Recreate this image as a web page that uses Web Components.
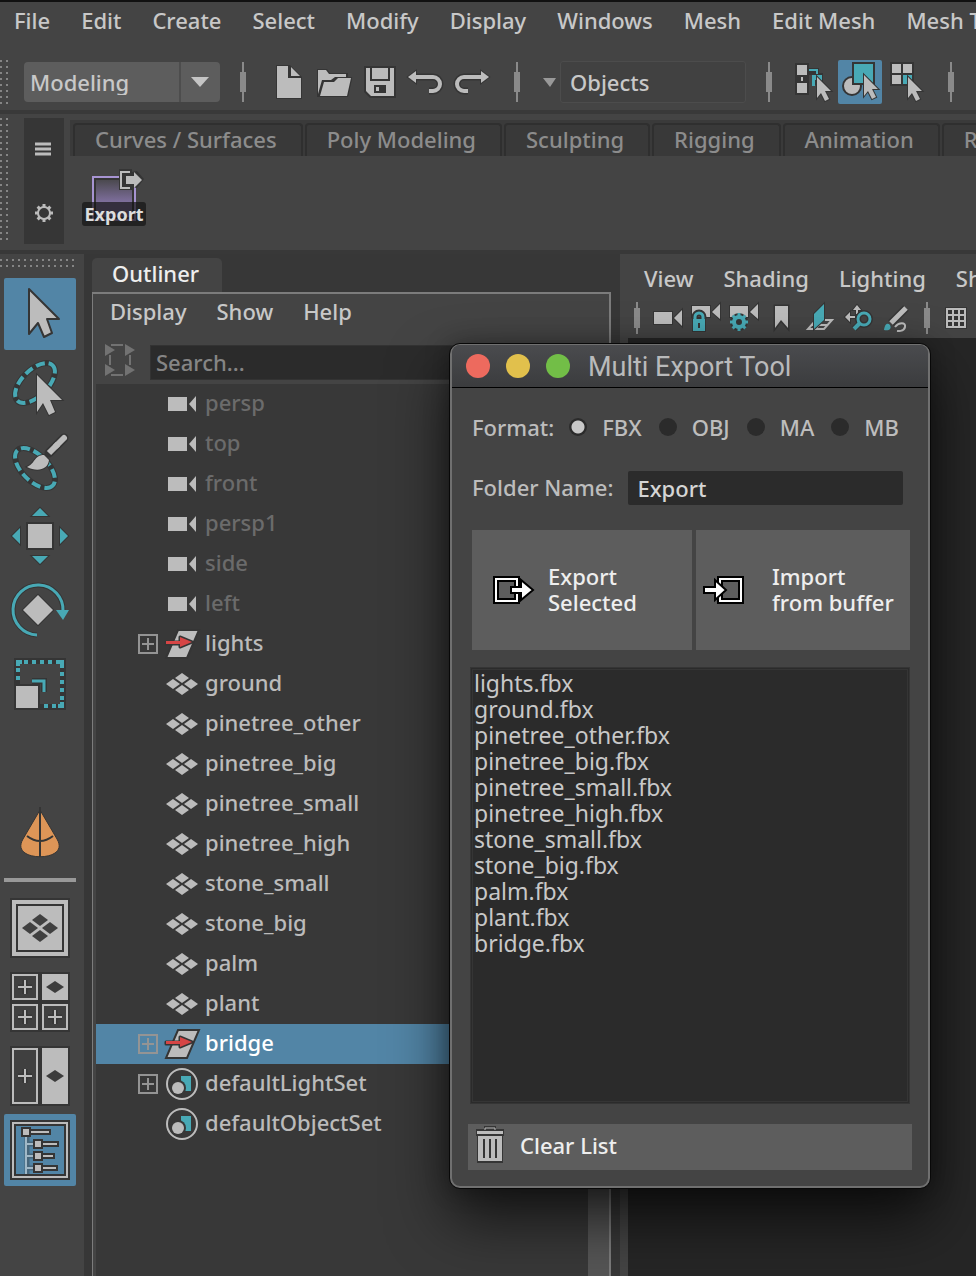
<!DOCTYPE html>
<html lang="en">
<head>
<meta charset="utf-8">
<title>Multi Export Tool</title>
<style>
  html {
    --bg: #444; --dark: #383838; --field: #2b2b2b; --ink: #c8c8c8; --glyph: #bcbcbc;
    --blue: #5285a6; --teal: #48a9b5; --edge: #353535; --button: #5d5d5d;
    background: #444;
  }
  body { margin: 0; font: 500 22px/26px "Noto Sans", sans-serif; color: #c8c8c8; }
</style>
</head>
<body>
<maya-app></maya-app>
<script>
const define = (name, html, setup) => {
  const template = document.createElement('template');
  template.innerHTML = '<style>*{box-sizing:border-box}:host{display:block}button,input,select{font:inherit}button{border:0;padding:0;color:inherit;background:none}</style>' + html;
  customElements.define(name, class extends HTMLElement {
    constructor() {
      super();
      this.attachShadow({ mode: 'open' }).append(template.content.cloneNode(true));
    }
    connectedCallback() { if (setup) setup(this, this.shadowRoot); }
  });
};

const G = '#bcbcbc', T = '#48a9b5', D = '#353535';
const pointer = (x, y) => `<path d="M${x} ${y}l14 14h-6l4 8-4 2-4-8-4 5z" fill="${G}" stroke="${D}" stroke-width="2" paint-order="stroke"/>`;
const diamonds = (cx, cy, dx, dy, w, h, c) => [[0,-dy],[-dx,0],[dx,0],[0,dy]].map(([a, b]) => `<path d="M${cx+a-w} ${cy+b}l${w}-${h} ${w} ${h}-${w} ${h}z" fill="${c}"/>`).join('');
const plusBox = (x, y, w, h) => `<rect x="${x-1}" y="${y-1}" width="${w+2}" height="${h+2}" fill="${D}"/><rect x="${x+2}" y="${y+2}" width="${w-4}" height="${h-4}" fill="#404040"/><rect x="${x+1}" y="${y+1}" width="${w-2}" height="${h-2}" fill="none" stroke="${G}" stroke-width="2"/><path d="M${x+w/2} ${y+h/2-7}v14m-7-7h14" stroke="${D}" stroke-width="5"/><path d="M${x+w/2} ${y+h/2-7}v14m-7-7h14" stroke="${G}" stroke-width="2"/>`;
const solidBox = (x, y, w, h) => `<rect x="${x-1}" y="${y-1}" width="${w+2}" height="${h+2}" fill="${D}"/><rect x="${x}" y="${y}" width="${w}" height="${h}" fill="${G}"/><path d="M${x+w/2-9} ${y+h/2}l9-6 9 6-9 6z" fill="#3c3c3c"/>`;
const gear = (cx, cy, r, c, t, s) => `<g stroke="${c}" fill="none"><circle cx="${cx}" cy="${cy}" r="${r}" stroke-width="${s}"/>` + [0,45,90,135,180,225,270,315].map(a => `<path d="M${cx} ${cy-r-t}v${t}" stroke-width="3" transform="rotate(${a} ${cx} ${cy})"/>`).join('') + '</g>';
const transformIcon = `<path d="M12 6H33L21 34H0Z" fill="${G}" stroke="${D}" stroke-width="2"/><path d="M0 18H14V13L26 18 14 23V20H0Z" fill="#d64545" stroke="${D}" stroke-width="3" paint-order="stroke" stroke-linejoin="round"/><path d="M0 18H15" stroke="#d64545" stroke-width="2"/>`;
const small = 44, tool = 72;
const icons = {
  newfile: [small, small, `<path d="M10 5H24L36 17V39H10Z" fill="${D}"/><path d="M11 6H22V18H35V38H11Z" fill="${G}"/><path d="M25 7 34 16H25Z" fill="${G}"/>`],
  open: [small, small, `<path d="M5 9h10l3 4h18v6h4l-4 18H5z" fill="${D}"/><path d="M6 34V10h8l3 4h17v3H23l-4 3H10z" fill="${G}"/><path d="M8 36 12 22H22L26 18H39L35 36Z" fill="${G}" stroke="${D}" stroke-width="2" paint-order="stroke"/>`],
  save: [small, small, `<path d="M6 6H38V38H12L6 32Z" fill="${D}"/><path d="M8 8h4v13h20V8h4v28H13l-5-5zM14 8h16v11H14z" fill="${G}"/><path d="M16 25h12v8H16z" fill="${D}"/><path d="M18 27h3v4h-3z" fill="${G}"/>`],
  undo: [small, small, `<path d="M10 17H29a7 7 0 0 1 0 14H25" fill="none" stroke="${D}" stroke-width="7"/><path d="M4 17l8-6v12z" fill="${G}" stroke="${D}" stroke-width="2" paint-order="stroke"/><path d="M10 17H29a7 7 0 0 1 0 14H25" fill="none" stroke="${G}" stroke-width="4"/>`],
  redo: [small, small, `<path d="M33 17H14a7 7 0 0 0 0 14H18" fill="none" stroke="${D}" stroke-width="7"/><path d="M39 17l-8-6v12z" fill="${G}" stroke="${D}" stroke-width="2" paint-order="stroke"/><path d="M33 17H14a7 7 0 0 0 0 14H18" fill="none" stroke="${G}" stroke-width="4"/>`],
  hierarchy: [small, small, `<path d="M3 3h14v32H3z" fill="${D}"/><path d="M5 5h10v10H5zM9 17h2v4H9zM5 23h10v10H5z" fill="${G}"/><path d="M15 8h12v5h4v12H20V15h-5z" fill="${D}"/><path d="M17 10h8v4" fill="none" stroke="${T}" stroke-width="2"/><path d="M20 15h10v10h-3v-5h-4v6h-3z" fill="${T}"/>${pointer(25,17)}`],
  object: [small, small, `<circle cx="14" cy="26" r="9" fill="${G}" stroke="${D}" stroke-width="2"/><path d="M15 3h21v21H15z" fill="${T}" stroke="${D}" stroke-width="2"/>${pointer(26,15)}`],
  component: [small, small, `<path d="M6 2h24v24H6z" fill="${D}"/><path d="M8 4h9v9H8zM19 4h9v9h-9zM8 15h9v9H8z" fill="${G}"/><path d="M19 15h9v9h-9z" fill="${T}"/>${pointer(24,17)}`],
  menu: [18, 16, `<path d="M0 4h16M0 9h16M0 14h16" stroke="${G}" stroke-width="3"/>`],
  gear: [20, 20, gear(10,10,6,G,3,2)],
  shelfexport: [64, 60, `<defs><linearGradient id="p" x2="0" y2="1"><stop offset="0" stop-color="#444"/><stop offset=".6" stop-color="#8070a0"/></linearGradient></defs><path d="M11 9H53V52H11Z" fill="url(#p)" stroke="#a794d2" stroke-width="2"/><path d="M13 11H51V50H13Z" fill="none" stroke="${D}" stroke-width="2"/><path d="M37 1h13v3l5-1 7 8-7 9-5-1v3H37z" fill="${D}"/><path d="M48 4H39V20H48" fill="none" stroke="${G}" stroke-width="2"/><path d="M44 8h8V4l8 8-8 8v-4h-8z" fill="${G}"/>`],
  select: [tool, tool, `<path d="M25 11 55 41H43L48 55 40 59 34 45 25 56Z" fill="${G}" stroke="${D}" stroke-width="2" stroke-linejoin="round"/>`],
  lasso: [tool, tool, `<g transform="rotate(-45 31 31)" fill="none"><ellipse cx="31" cy="31" rx="25" ry="13" stroke="${D}" stroke-width="6"/><ellipse cx="31" cy="31" rx="25" ry="13" stroke="${T}" stroke-width="4" stroke-dasharray="9 4"/></g><path d="M33 23 58 48H46L51 60 45 63 39 51 33 60Z" fill="${G}" stroke="${D}" stroke-width="2" paint-order="stroke"/>`],
  paint: [tool, tool, `<g transform="rotate(45 31 42)" fill="none"><ellipse cx="31" cy="42" rx="25" ry="13" stroke="${D}" stroke-width="6"/><ellipse cx="31" cy="42" rx="25" ry="13" stroke="${T}" stroke-width="4" stroke-dasharray="9 4"/></g><path d="M60 12 45 27" stroke="${D}" stroke-width="9" stroke-linecap="round"/><path d="M60 12 52 20" stroke="${G}" stroke-width="6" stroke-linecap="round"/><path d="M54 18 45 27" stroke="${G}" stroke-width="6"/><path d="M23 41C31 38 30 29 40 29L45 34C44 44 33 46 23 41Z" fill="${G}" stroke="${D}" stroke-width="2" paint-order="stroke"/>`],
  move: [tool, tool, `<path d="M22 22h28v28H22z" fill="${D}"/><path d="M24 24h24v24H24z" fill="${G}"/><path d="M36 8l8 8H28zM36 64l8-8H28zM8 36l8-8v16zM64 36l-8-8v16z" fill="${T}" stroke="${D}" paint-order="stroke" stroke-width="2"/>`],
  rotate: [tool, tool, `<path d="M33 61A25 25 0 1 1 59 36" fill="none" stroke="${D}" stroke-width="5"/><path d="M33 61A25 25 0 1 1 59 37" fill="none" stroke="${T}" stroke-width="3"/><path d="M52 36h13l-6 10z" fill="${T}"/><path d="M34 21l15 15-15 15-15-15z" fill="${G}" stroke="${D}" paint-order="stroke" stroke-width="2"/>`],
  scale: [tool, tool, `<path d="M10 10h52v52H10z" fill="${D}"/><path d="M16 16h40v40H16z" fill="#444"/><path d="M14 14h44v44H14z" fill="none" stroke="${T}" stroke-width="4" stroke-dasharray="4 4" stroke-dashoffset="2"/><path d="M12 18v-6h6v4h-2v2zM54 12h6v6h-4v-2h-2zM60 54v6h-6v-4h2v-2z" fill="${T}"/><path d="M28 33h12v11" fill="none" stroke="${D}" stroke-width="6"/><path d="M28 33h12v11" fill="none" stroke="${T}" stroke-width="3"/><path d="M10 36h26v26H10z" fill="${D}"/><path d="M12 38h22v22H12z" fill="${G}"/>`],
  cone: [tool, tool, `<path d="M36 12 53 41C57 48 55 52 51 55 44 60 28 60 21 55 17 52 15 48 19 41Z" fill="#dd9557" stroke="${D}" stroke-width="1"/><path d="M36 9v50M23 38Q36 48 49 38" fill="none" stroke="${D}" stroke-width="2"/>`],
  single: [tool, tool, `<path d="M6 6h60v60H6z" fill="${D}"/><path d="M8 8h56v56H8z" fill="${G}"/><path d="M13 13h46v46H13z" fill="none" stroke="${D}" stroke-width="2"/>${diamonds(36,36,10,8,8,6,'#404040')}`],
  four: [tool, tool, `<path d="M6 6h60v60H6z" fill="${D}"/>` + plusBox(8,8,26,26) + solidBox(38,8,26,26) + plusBox(8,38,26,26) + plusBox(38,38,26,26)],
  two: [tool, tool, `<path d="M6 6h60v60H6z" fill="${D}"/>` + plusBox(8,8,26,56) + solidBox(38,8,26,56)],
  outliner: [tool, tool, `<g fill="none"><path d="M9 9h54v54H9z" stroke="${D}" stroke-width="6"/><path d="M9 9h54v54H9z" stroke="${G}" stroke-width="2"/><path d="M23 22V60M23 30H32M23 42H32M23 54H32" stroke="#47667b" stroke-width="5"/><path d="M22 22V60M22 30H32M22 42H32M22 54H32" stroke="#a0b8c7" stroke-width="2"/></g>` + [[17,18,47],[29,30,55],[29,42,51],[29,54,54]].map(([x,y,e]) => `<path d="M${x} ${y-5}h10v2H${e}v6H${x+10}v2H${x}z" fill="${D}"/><path d="M${x+2} ${y-3}h6v6h-6zM${x+10} ${y-1}H${e-2}v2H${x+10}z" fill="${G}"/>`).join('')],
  camera: [32, 40, `<path d="M2 13h19v14H2zM23 20l7-8v16z" fill="${G}"/>`],
  mesh: [32, 40, diamonds(16,20,9,6,7,5,G)],
  transform: [36, 40, transformIcon],
  set: [32, 40, `<circle cx="16" cy="20" r="15" fill="none" stroke="${G}" stroke-width="2"/><path d="M15 12H25V27H15Z" fill="${T}"/><circle cx="12" cy="24" r="8" fill="#383838"/><circle cx="12" cy="24" r="6" fill="${G}"/>`],
  expander: [20, 20, `<path d="M1 1h18v18H1zM10 4v12M4 10h12" fill="none" stroke="#949494" stroke-width="2"/>`],
  sync: [32, 32, `<g fill="none" stroke="#727272" stroke-width="2"><path d="M7 1h12M7 31h12M6 11v10M26 11v10"/></g><path d="M1 0l10 6-10 6zM21 0l10 6-10 6zM1 20l10 6-10 6zM21 20l10 6-10 6z" fill="#727272"/>`],
  vcamera: [38, 32, `<path d="M5 10h18v12H5zM25 16l8-8v16z" fill="${G}" stroke="${D}" stroke-width="2" paint-order="stroke"/>`],
  vlock: [38, 32, `<path d="M5 4h18v11H5zM25 10l8-8v15z" fill="${G}" stroke="${D}" stroke-width="2" paint-order="stroke"/><path d="M8 17V15a4 4 0 0 1 8 0V17" fill="none" stroke="${D}" stroke-width="7"/><path d="M6 17h12v12H6z" fill="${T}" stroke="${D}" stroke-width="2" paint-order="stroke"/><path d="M8 18V15a4 4 0 0 1 8 0V18" fill="none" stroke="${T}" stroke-width="3"/><path d="M11 21h2v5h-2z" fill="${D}"/>`],
  vgear: [38, 32, `<path d="M5 4h18v11H5zM25 10l8-8v15z" fill="${G}" stroke="${D}" stroke-width="2" paint-order="stroke"/><circle cx="14" cy="20" r="9" fill="${D}"/>${gear(14,20,5,T,4,4)}`],
  vbookmark: [38, 32, `<path d="M12 4h13v22l-7-8-6 8z" fill="${G}" stroke="${D}" stroke-width="3" paint-order="stroke"/>`],
  vplane: [38, 32, `<path d="M7 27h16l8-9H15zM14 27l8-9M10 23h16" fill="none" stroke="${G}" stroke-width="2"/><path d="M13 12 23 2V18L13 27Z" fill="${T}" stroke="${D}" stroke-width="2" paint-order="stroke"/>`],
  vzoom: [38, 32, `<path d="M18 3l4 5h-3v4h-2V8h-3zM6 15l5-5v4h5v2h-5v4z" fill="${G}" stroke="${D}" stroke-width="2" paint-order="stroke"/><g fill="none" stroke="${D}" stroke-width="6"><circle cx="25" cy="17" r="6"/><path d="M21 21 15 27"/></g><g fill="none" stroke="${T}" stroke-width="3"><circle cx="25" cy="17" r="6"/><path d="M21 21 15 27" stroke-width="4"/></g>`],
  vbrush: [38, 32, `<path d="M29 6 14 21" stroke="${D}" stroke-width="8"/><path d="M29 6 14 21" stroke="${G}" stroke-width="5"/><path d="M7 28C8 21 11 21 13 23 15 27 12 29 7 28Z" fill="${T}"/><path d="M18 25C22 20 29 20 28 25S20 29 20 29" fill="none" stroke="${G}" stroke-width="2"/>`],
  vgrid: [38, 32, `<path d="M6 5h22v22H6z" fill="${D}"/><path d="M8 7h18v18H8zM14 7v18M20 7v18M8 13h18M8 19h18" fill="none" stroke="${G}" stroke-width="2"/>`],
  exporter: [42, 28, `<path d="M3 3h21v22H3z" fill="none" stroke="#000" stroke-width="6"/><path d="M3 3h21v22H3z" fill="none" stroke="#fff" stroke-width="2"/><path d="M18 11H28V4L40 14 28 24V17H18Z" fill="#fff" stroke="#000" stroke-width="2"/>`],
  importer: [42, 28, `<path d="M18 3h21v22H18z" fill="none" stroke="#000" stroke-width="6"/><path d="M18 3h21v22H18z" fill="none" stroke="#fff" stroke-width="2"/><path d="M2 11H13V4L24 14 13 24V17H2Z" fill="#fff" stroke="#000" stroke-width="2"/>`],
  trash: [30, 38, `<path d="M9 0h12v3h8v7h-1v27H2V10H1V3h8z" fill="${D}"/><path d="M10 4V2h10v2" fill="none" stroke="${G}"/><path d="M2 5h26v3H2zM3 10h24v25H3z" fill="${G}"/><path d="M9 13v19M15 13v19M21 13v19" stroke="${D}" stroke-width="2"/>`]
};

define('maya-icon', '<style>:host{flex:none;line-height:0}svg{display:block;overflow:visible}</style><svg aria-hidden="true"></svg>', (host, root) => {
  const [w, h, art] = icons[host.getAttribute('name')];
  const svg = root.querySelector('svg');
  svg.setAttribute('width', w);
  svg.setAttribute('height', h);
  svg.setAttribute('viewBox', `0 0 ${w} ${h}`);
  svg.innerHTML = art;
});

define('dot-grip', `<style>
  :host{flex:none;background:linear-gradient(90deg,transparent 2px,var(--bg) 2px),linear-gradient(#858585 2px,var(--bg) 2px);background-size:6px 6px}
</style>`);

define('bar-divider', `<style>
  :host{flex:none;display:flex;align-items:center;justify-content:center;width:46px;height:40px;background:linear-gradient(#8a8a8a,#8a8a8a) center/2px 100% no-repeat}
  i{width:6px;height:20px;background:#8a8a8a}
</style><i></i>`);

define('menu-bar', `<style>
  :host{overflow:hidden}
  nav{display:flex;gap:var(--menu-gap,30px);height:100%;align-items:center}
  ::slotted(button){flex:none;border:0;padding:0;background:none;color:var(--ink);font:inherit;white-space:nowrap}
</style><nav><slot></slot></nav>`);

define('tool-button', `<style>
  :host{flex:none}
  button{display:block;border-radius:2px}
  :host([active]) button{background:var(--blue)}
</style><button type="button"></button>`, (host, root) => {
  const name = host.getAttribute('icon');
  const icon = document.createElement('maya-icon');
  icon.setAttribute('name', name);
  const button = root.querySelector('button');
  button.setAttribute('aria-label', name);
  button.replaceChildren(icon);
});

define('status-line', `<style>
  :host{display:flex;align-items:center;height:56px;overflow:hidden}
  dot-grip{width:10px;height:44px;margin-right:14px}
  .mode{flex:none;position:relative;width:196px;height:40px;border-radius:4px;background:linear-gradient(90deg,transparent 155px,#4d4d4d 155px 157px,transparent 157px),var(--button)}
  select{appearance:none;width:100%;height:40px;border:0;padding:0 48px 0 6px;background:none;color:var(--ink)}
  .mode svg{position:absolute;right:11px;top:15px;pointer-events:none}
  .group{display:flex;gap:2px}
  .drop{flex:none;margin:0 4px 0 3px}
  input{flex:none;width:186px;height:42px;padding:0 9px;border:1px solid #4c4c4c;border-radius:3px;background:#414141;color:var(--ink)}
</style>
<dot-grip></dot-grip>
<div class="mode"><select aria-label="Menu set"><option>Modeling</option></select><svg width="18" height="10"><path d="M0 0h18l-9 10z" fill="#c4c4c4"/></svg></div>
<bar-divider></bar-divider>
<div class="group"><tool-button icon="newfile"></tool-button><tool-button icon="open"></tool-button><tool-button icon="save"></tool-button><tool-button icon="undo"></tool-button><tool-button icon="redo"></tool-button></div>
<bar-divider></bar-divider>
<svg class="drop" width="13" height="9"><path d="M0 0h13l-6 9z" fill="#999"/></svg>
<input aria-label="Selection mask" value="Objects">
<bar-divider></bar-divider>
<div class="group"><tool-button icon="hierarchy"></tool-button><tool-button icon="object" active></tool-button><tool-button icon="component"></tool-button></div>
<bar-divider></bar-divider>`);

define('shelf-panel', `<style>
  :host{display:flex;height:140px;padding:4px 0 6px;border-top:4px solid #393939;overflow:hidden}
  dot-grip{width:10px;height:124px;margin-right:14px}
  .side{flex:none;display:flex;flex-direction:column;align-items:center;width:40px;height:126px;padding:22px 0 21px;justify-content:space-between;background:#363636;margin-right:6px}
  .body{flex:1;min-width:0}
  .tabs{display:flex;gap:2px;height:36px;margin-top:2px;padding:3px 0 0 3px;background:#3a3a3a;overflow:hidden}
  .tabs button{flex:none;height:33px;padding:0 24px 3px 20px;border:2px solid #2f2f2f;border-bottom:0;border-radius:4px 4px 0 0;background:#393939;color:#8c8c8c;white-space:nowrap}
  .item{display:grid;width:64px;margin:12px 0 0 12px}
  .item>*{grid-area:1/1}
  .item span{align-self:end;height:24px;margin-bottom:2px;border-radius:3px;background:rgba(20,20,20,.7);font:bold 18px/24px "Noto Sans",sans-serif;color:#ddd}
</style>
<dot-grip></dot-grip>
<div class="side"><maya-icon name="menu"></maya-icon><maya-icon name="gear"></maya-icon></div>
<div class="body"><div class="tabs"><button>Curves / Surfaces</button><button>Poly Modeling</button><button>Sculpting</button><button>Rigging</button><button>Animation</button><button>Rendering</button></div>
<button class="item"><maya-icon name="shelfexport"></maya-icon><span>Export</span></button></div>`);

define('tool-box', `<style>
  :host{display:flex;flex-direction:column;gap:2px;width:84px;padding:4px 8px 0 4px;background:var(--bg)}
  dot-grip{width:74px;height:8px;margin:1px 0 9px -4px}
  .cone{margin:76px 0 6px}
  hr{width:72px;height:4px;border:0;margin:0 0 8px;background:#999}
</style>
<dot-grip></dot-grip>
<tool-button icon="select" active></tool-button><tool-button icon="lasso"></tool-button><tool-button icon="paint"></tool-button><tool-button icon="move"></tool-button><tool-button icon="rotate"></tool-button><tool-button icon="scale"></tool-button>
<tool-button class="cone" icon="cone"></tool-button><hr>
<tool-button icon="single"></tool-button><tool-button icon="four"></tool-button><tool-button icon="two"></tool-button><tool-button icon="outliner" active></tool-button>`);

define('tree-row', `<style>
  :host{display:flex;align-items:center;height:40px;padding-left:42px;color:#bbb}
  :host([dim]){color:#6b6b6b}
  :host([selected]){background:var(--blue);color:#fff}
  .exp{width:20px;margin-right:8px}
  .icon{width:32px;margin-right:7px}
  .text{padding-bottom:4px}
</style><span class="exp"></span><span class="icon"></span><span class="text"><slot></slot></span>`, (host, root) => {
  const put = (where, name) => {
    const icon = document.createElement('maya-icon');
    icon.setAttribute('name', name);
    root.querySelector(where).replaceChildren(icon);
  };
  put('.icon', host.getAttribute('icon'));
  if (host.hasAttribute('expandable')) put('.exp', 'expander');
});

define('outliner-panel', `<style>
  :host{display:flex;flex-direction:column;padding:4px 8px 0 4px;background:#373737}
  h2{flex:none;align-self:flex-start;width:130px;height:34px;margin:0 0 0 4px;padding-left:20px;border-radius:5px 5px 0 0;background:var(--bg);color:#eee;font:500 22px/30px "Noto Sans",sans-serif}
  .frame{flex:1;display:flex;flex-direction:column;margin:0 1px 0 4px;border:2px solid #7c7c7c;border-width:2px 2px 0 1px;padding-left:3px;background:var(--bg)}
  menu-bar{height:34px;padding-left:14px}
  .search{display:flex;align-items:center;gap:14px;height:56px;padding:12px 0 0 8px}
  .search maya-icon{margin-bottom:4px}
  input{flex:1;min-width:0;height:35px;padding:0 5px;border:1px solid #333;background:var(--field);color:var(--ink)}
  input::placeholder{color:#858585;opacity:1}
  .tree{flex:1;display:grid;grid-template-columns:1fr 21px;background:var(--dark)}
  .bar{background:#555}
</style>
<h2>Outliner</h2>
<div class="frame">
<menu-bar><button>Display</button><button>Show</button><button>Help</button></menu-bar>
<div class="search"><maya-icon name="sync"></maya-icon><input type="search" aria-label="Search" placeholder="Search..."></div>
<div class="tree"><div>
<tree-row icon="camera" dim>persp</tree-row><tree-row icon="camera" dim>top</tree-row><tree-row icon="camera" dim>front</tree-row><tree-row icon="camera" dim>persp1</tree-row><tree-row icon="camera" dim>side</tree-row><tree-row icon="camera" dim>left</tree-row>
<tree-row icon="transform" expandable>lights</tree-row><tree-row icon="mesh">ground</tree-row><tree-row icon="mesh">pinetree_other</tree-row><tree-row icon="mesh">pinetree_big</tree-row><tree-row icon="mesh">pinetree_small</tree-row><tree-row icon="mesh">pinetree_high</tree-row><tree-row icon="mesh">stone_small</tree-row><tree-row icon="mesh">stone_big</tree-row><tree-row icon="mesh">palm</tree-row><tree-row icon="mesh">plant</tree-row>
<tree-row icon="transform" expandable selected>bridge</tree-row><tree-row icon="set" expandable>defaultLightSet</tree-row><tree-row icon="set">defaultObjectSet</tree-row>
</div><div class="bar"></div></div></div>`);

define('view-panel', `<style>
  :host{display:flex;flex-direction:column;min-width:0;background:var(--bg);overflow:hidden}
  menu-bar{height:48px;padding-left:24px}
  .bar{display:flex;align-items:center;height:36px;padding:0 0 4px 5px}
  bar-divider{width:24px;height:32px}
  .canvas{flex:1;margin-left:8px;background:#262626}
</style>
<menu-bar><button>View</button><button>Shading</button><button>Lighting</button><button>Show</button></menu-bar>
<div class="bar"><bar-divider></bar-divider><tool-button icon="vcamera"></tool-button><tool-button icon="vlock"></tool-button><tool-button icon="vgear"></tool-button><tool-button icon="vbookmark"></tool-button><tool-button icon="vplane"></tool-button><tool-button icon="vzoom"></tool-button><tool-button icon="vbrush"></tool-button><bar-divider></bar-divider><tool-button icon="vgrid"></tool-button></div>
<div class="canvas"></div>`);

define('export-window', `<style>
  :host{width:482px;border:1px solid #080808;border-radius:11px;background:var(--bg);box-shadow:0 30px 60px rgba(0,0,0,.65),0 0 24px rgba(0,0,0,.3);overflow:hidden}
  .inner{border:2px solid #707070;border-top-width:1px;border-radius:10px}
  header{display:flex;align-items:center;gap:16px;height:43px;padding:0 14px;border-bottom:1px solid #000;background:linear-gradient(#4a4b4e,#3b3c3e);border-radius:8px 8px 0 0}
  header i{width:24px;height:24px;border-radius:50%}
  h1{margin:2px 0 0 2px;font:400 27px/30px Roboto,sans-serif;color:#b9babb}
  form{padding:0 16px 16px}
  .format,.folder{color:#bdbdbd}
  .format{display:flex;align-items:center;height:32px;margin:23px 0 0 4px}
  .format label{margin-right:17px}
  .format .lead{margin-right:15px}
  input[type=radio]{flex:none;appearance:none;width:18px;height:18px;margin:0 15px 0 0;border-radius:50%;background:var(--field)}
  input[type=radio]:checked{background:radial-gradient(#c8c8c8 6px,var(--field) 7px)}
  .folder{display:flex;align-items:center;gap:15px;height:36px;margin:27px 9px 0 4px}
  .folder label{padding-bottom:2px}
  .folder input{flex:1;min-width:0;height:34px;padding:0 9px;border:0;border-radius:2px;background:var(--field);color:#d5d5d5}
  .actions{display:grid;grid-template-columns:220px 1fr;gap:4px;margin:24px 2px 17px 4px}
  .actions button,.clear{display:flex;align-items:center;background:var(--button);color:#eee;text-align:left}
  .actions span{padding-bottom:2px}
  .actions button{height:120px}
  .actions button:first-child{gap:13px;padding-left:21px}
  .actions button:last-child{gap:28px;padding-left:6px}
  ul{list-style:none;height:437px;margin:0 2px 20px;padding:0 1px;border:3px double #353535;background:var(--field);color:var(--ink);font-weight:400;font-size:23px}
  .clear{gap:15px;width:100%;height:46px;padding:0 7px 4px}
</style>
<div class="inner">
<header><i style="background:#ed6a5e"></i><i style="background:#e1c04c"></i><i style="background:#72be47"></i><h1>Multi Export Tool</h1></header>
<form>
<div class="format"><span class="lead">Format:</span><input type="radio" name="f" id="fbx" checked><label for="fbx">FBX</label><input type="radio" name="f" id="obj"><label for="obj">OBJ</label><input type="radio" name="f" id="ma"><label for="ma">MA</label><input type="radio" name="f" id="mb"><label for="mb">MB</label></div>
<div class="folder"><label for="folder">Folder Name:</label><input id="folder" value="Export"></div>
<div class="actions"><button type="button"><maya-icon name="exporter"></maya-icon><span>Export<br>Selected</span></button><button type="button"><maya-icon name="importer"></maya-icon><span>Import<br>from buffer</span></button></div>
<ul><li>lights.fbx</li><li>ground.fbx</li><li>pinetree_other.fbx</li><li>pinetree_big.fbx</li><li>pinetree_small.fbx</li><li>pinetree_high.fbx</li><li>stone_small.fbx</li><li>stone_big.fbx</li><li>palm.fbx</li><li>plant.fbx</li><li>bridge.fbx</li></ul>
<button type="button" class="clear"><maya-icon name="trash"></maya-icon>Clear List</button>
</form></div>`);

define('maya-app', `<style>
  :host{position:relative;display:flex;flex-direction:column;min-height:100vh;overflow:hidden;background:var(--bg)}
  .top{box-sizing:border-box;--menu-gap:31px;height:54px;padding:0 0 16px 14px;border-top:2px solid #111}
  .work{flex:1;display:grid;grid-template-columns:84px 536px minmax(0,1fr);border-top:4px solid #383838}
  export-window{position:absolute;left:449px;top:343px}
</style>
<menu-bar class="top"><button>File</button><button>Edit</button><button>Create</button><button>Select</button><button>Modify</button><button>Display</button><button>Windows</button><button>Mesh</button><button>Edit Mesh</button><button>Mesh Tools</button></menu-bar>
<status-line></status-line>
<shelf-panel></shelf-panel>
<div class="work"><tool-box></tool-box><outliner-panel></outliner-panel><view-panel></view-panel></div>
<export-window></export-window>`);
</script>
</body>
</html>
